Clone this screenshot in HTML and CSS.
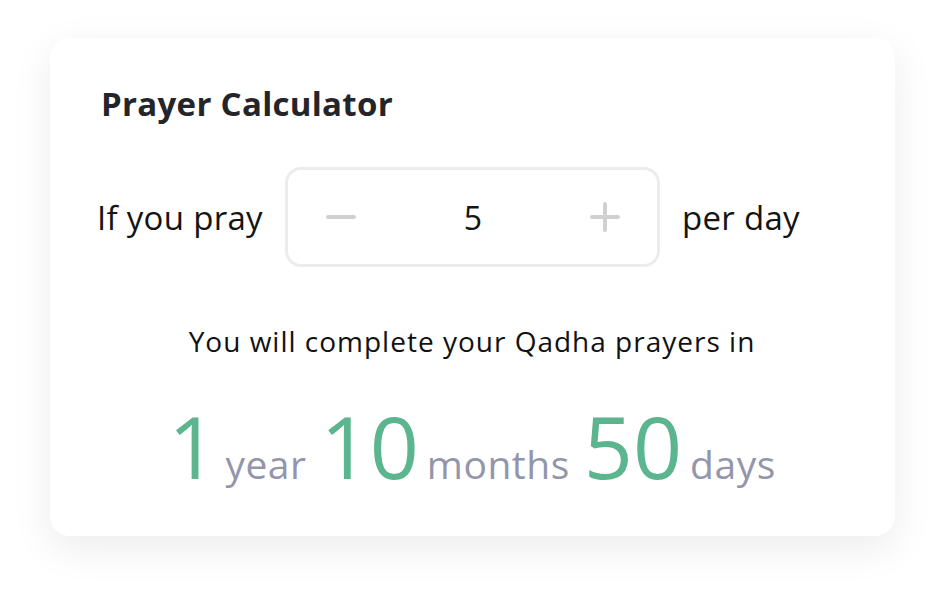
FILE: index.html
```html
<!DOCTYPE html>
<html lang="en">
<head>
  <meta charset="UTF-8">
  <meta name="viewport" content="width=device-width, initial-scale=1.0">
  <title>Prayer Calculator</title>
  <link rel="stylesheet" href="styles.css">
</head>
<body>
  <div class="card">
    <h1 class="title">Prayer Calculator</h1>

    <div class="pray-row">
      <span class="label">If you pray</span>
      <div class="stepper">
        <button class="step-btn" type="button" aria-label="Decrease">
          <svg width="32" height="32" viewBox="0 0 32 32">
            <line x1="3" y1="16" x2="29" y2="16" stroke="#d0d0d0" stroke-width="4" stroke-linecap="round"/>
          </svg>
        </button>
        <span class="count">5</span>
        <button class="step-btn" type="button" aria-label="Increase">
          <svg width="32" height="32" viewBox="0 0 32 32">
            <line x1="3" y1="16" x2="29" y2="16" stroke="#d0d0d0" stroke-width="4" stroke-linecap="round"/>
            <line x1="16" y1="3" x2="16" y2="29" stroke="#d0d0d0" stroke-width="4" stroke-linecap="round"/>
          </svg>
        </button>
      </div>
      <span class="label">per day</span>
    </div>

    <p class="result">You will complete your Qadha prayers in</p>

    <div class="totals">
      <span class="num">1</span><span class="unit">year</span>
      <span class="num">10</span><span class="unit">months</span>
      <span class="num">50</span><span class="unit">days</span>
    </div>
  </div>
</body>
</html>
```

FILE: styles.css
```css
body {
  font-family: "Open Sans", Lato, sans-serif;
  background-color: #ffffff;
  margin: 0;
  padding: 38px 51px 64px 50px;
}

.card {
  background-color: #fff;
  border-radius: 20px;
  box-shadow: 0 12px 40px rgba(0, 0, 0, 0.08);
  padding: 46px 48px 48px 47px;
  height: 498px;
  box-sizing: border-box;
}

.title {
  margin: 0 0 0 4px;
  font-size: 33px;
  line-height: 40px;
  font-weight: 700;
  letter-spacing: 0.3px;
  color: #24252a;
}

.pray-row {
  display: flex;
  align-items: center;
  gap: 22px;
  margin-top: 43px;
}

.label {
  font-size: 33px;
  font-weight: 400;
  letter-spacing: 0.3px;
  color: #141414;
}

.stepper {
  width: 375px;
  height: 100px;
  box-sizing: border-box;
  border: 3px solid #ececec;
  border-radius: 16px;
  display: flex;
  align-items: center;
  justify-content: space-between;
  padding: 0 36px 0 37px;
}

.step-btn {
  background: none;
  border: none;
  padding: 0;
  display: flex;
  cursor: pointer;
}

.count {
  font-size: 32px;
  color: #141414;
}

.result {
  margin: 57px 0 0;
  text-align: center;
  font-size: 28px;
  line-height: 34px;
  font-weight: 500;
  letter-spacing: 1px;
  color: #111;
}

.totals {
  display: flex;
  justify-content: center;
  align-items: baseline;
  margin-top: 38px;
  line-height: 100px;
}

.num {
  font-size: 86px;
  color: #5bb58e;
  margin-right: 8px;
}

.unit {
  font-size: 39px;
  letter-spacing: 0.5px;
  color: #9396ab;
  margin-right: 14px;
}

.unit:last-child {
  margin-right: 0;
}
```
